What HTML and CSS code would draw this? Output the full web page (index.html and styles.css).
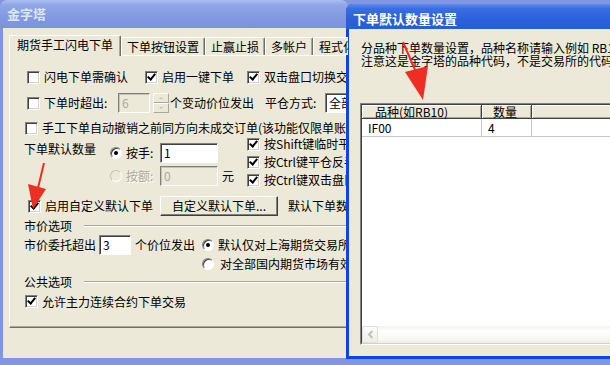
FILE: index.html
```html
<!DOCTYPE html>
<html lang="zh-CN">
<head>
  <meta charset="UTF-8" />
  <title>金字塔</title>
  <link rel="stylesheet" href="styles.css">
</head>
<body>

<div class="win main">
  <div class="title">金字塔</div>
  <div class="client">
    <div class="tabs">
      <div class="tab cur">期货手工闪电下单</div>
      <div class="tab">下单按钮设置</div>
      <div class="tab">止赢止损</div>
      <div class="tab">多帐户</div>
      <div class="tab">程式化下单</div>
    </div>
    <div class="panel">
      <div class="row r1">
        <label class="chk w118"><i class="box"></i>闪电下单需确认</label>
        <label class="chk w102"><i class="box on"></i>启用一键下单</label>
        <label class="chk"><i class="box on"></i>双击盘口切换交易方向</label>
      </div>
      <div class="row r2">
        <label class="chk w91"><i class="box"></i>下单时超出:</label>
        <span class="inp off w32">6</span>
        <span class="spin"><i class="up"></i><i class="dn"></i></span>
        <span class="ml1 w84">个变动价位发出</span>
        <span class="ml11 w60">平仓方式:</span>
        <span class="inp combo">全部平仓</span>
      </div>
      <div class="row r3">
        <label class="chk"><i class="box"></i>手工下单自动撤销之前同方向未成交订单(该功能仅限单账户)</label>
      </div>
      <div class="qty">
        <div class="qty-label">下单默认数量</div>
        <div class="qty-opts">
          <div class="row h20"><i class="rad on"></i><span class="w34">按手:</span><span class="inp w58">1</span></div>
          <div class="row h20"><i class="rad off"></i><span class="w34 dim">按额:</span><span class="inp off w58">0</span><span class="ml4">元</span></div>
        </div>
        <div class="qty-keys">
          <label class="chk"><i class="box on"></i>按Shift键临时平仓</label>
          <label class="chk"><i class="box on"></i>按Ctrl键平仓反手</label>
          <label class="chk"><i class="box on"></i>按Ctrl键双击盘口下单</label>
        </div>
      </div>
      <div class="row r5">
        <label class="chk w132"><i class="box on"></i>启用自定义默认下单</label>
        <span class="btn">自定义默认下单...</span>
        <span class="ml10">默认下单数量</span>
      </div>
      <div class="grp g1"><span>市价选项</span><i class="rule"></i></div>
      <div class="row m1">
        <span class="w75">市价委托超出</span>
        <span class="inp w32">3</span>
        <span class="ml4 w60">个价位发出</span>
        <i class="rad on ml7"></i><span>默认仅对上海期货交易所有效</span>
      </div>
      <div class="row m2">
        <i class="rad"></i><span class="ml2">对全部国内期货市场有效</span>
      </div>
      <div class="grp g2"><span>公共选项</span><i class="rule"></i></div>
      <div class="row r9">
        <label class="chk"><i class="box on"></i>允许主力连续合约下单交易</label>
      </div>
    </div>
  </div>
</div>

<div class="win dlg">
  <div class="title">下单默认数量设置</div>
  <div class="client">
    <div class="note">
      <div class="note-line">分品种下单数量设置，品种名称请输入例如 RB10</div>
      <div class="note-line">注意这是金字塔的品种代码，不是交易所的代码</div>
    </div>
    <div class="list">
      <div class="list-in">
        <div class="lhead"><div class="lc c1">品种(如RB10)</div><div class="lc c2">数量</div><div class="lc c3"></div></div>
        <div class="lrow"><div class="lc c1">IF00</div><div class="lc c2">4</div><div class="lc c3"></div></div>
        <div class="lbody"></div>
        <div class="hscroll">
          <span class="sbtn"><svg width="14" height="15" viewBox="0 0 14 15"><polyline points="8.5,4 5,7.5 8.5,11" fill="none" stroke="#c2c0b4" stroke-width="2"/></svg></span>
        </div>
      </div>
    </div>
  </div>
</div>

<svg class="marks" width="610" height="365" viewBox="0 0 610 365">
  <line x1="44" y1="163" x2="38" y2="188" stroke="#ee2e22" stroke-width="2"/>
  <polygon points="28,184 46,189 33,209" fill="#ee2e22"/>
  <line x1="403" y1="42" x2="416" y2="72" stroke="#ee2e22" stroke-width="2"/>
  <polygon points="405,72 428,66 423,100" fill="#ee2e22"/>
</svg>

</body>
</html>
```

FILE: styles.css
```css
* {
  box-sizing: border-box;
}
body {
  margin: 0;
  width: 610px;
  height: 365px;
  overflow: hidden;
  position: relative;
  background: #8196df;
  font: 12px/14px "Noto Sans CJK SC", "Noto Sans", sans-serif;
  color: #000;
}

/* windows */
.win {
  position: absolute;
  display: flex;
  flex-direction: column;
  overflow: hidden;
  border-radius: 7px 7px 0 0;
  white-space: nowrap;
}
.main {
  left: 0;
  top: 0;
  width: 348px;
  height: 365px;
  background: #8196df;
}
.dlg {
  left: 346px;
  top: 4px;
  width: 264px;
  height: 355px;
  background: #0c45e4;
  border-radius: 7px 0 0 0;
}
.title {
  flex: none;
  height: 28px;
  padding-left: 7px;
  font-weight: bold;
  font-size: 13px;
  line-height: 28px;
  overflow: hidden;
}
.main .title {
  background: linear-gradient(#aabef0, #8ea5e6 20%, #8098df 70%, #7b93dc);
  color: #dde6f9;
}
.dlg .title {
  height: 25px;
  padding-top: 5px;
  line-height: 20px;
  color: #fff;
  background: linear-gradient(#5d8cf0, #3a6ee2 18%, #2c60da 60%, #2a5bd6);
}
.client {
  flex: 1;
  min-height: 0;
  overflow: hidden;
  background: #ece9d8;
}
.main .client {
  margin: 0 0 7px 3px;
  padding: 7px 0 0 6px;
}
.dlg .client {
  margin: 0 0 3px 3px;
  padding: 12px 0 0 11px;
}

/* tabs */
.tabs {
  display: flex;
  align-items: flex-end;
  height: 20px;
  position: relative;
  z-index: 1;
}
.tab {
  flex: none;
  height: 18px;
  padding: 0 5px;
  line-height: 17px;
  background: #ece9d8;
  border-top: 1px solid #fff;
  border-left: 1px solid #fff;
  border-right: 1px solid #716f64;
  box-shadow: inset -1px 0 #aca899;
  border-radius: 2px 2px 0 0;
}
.tab.cur {
  height: 21px;
  margin-bottom: -1px;
  padding: 0 7px;
  line-height: 18px;
}
.panel {
  height: 273px;
  width: 400px;
  padding-left: 14px;
  border-top: 1px solid #fff;
  border-left: 1px solid #fff;
  border-bottom: 1px solid #716f64;
  box-shadow: inset 0 -1px #aca899;
}

/* rows */
.row {
  display: flex;
  align-items: center;
  height: 14px;
}
.h20 { height: 20px; }
.r1 { margin: 14px 0 0 3px; }
.r2 { margin: 9px 0 0 3px; height: 20px; }
.r3 { margin: 8px 0 0 1px; }
.r5 { margin: 9px 0 0 4px; height: 20px; }
.m1 { margin-top: 3px; height: 20px; }
.m2 { margin: 2px 0 0 178px; height: 13px; }
.r9 { margin: 7px 0 0 1px; height: 13px; }

.w32 { width: 32px; }
.w34 { width: 34px; }
.w58 { width: 58px; }
.w60 { width: 60px; }
.w75 { width: 75px; }
.w84 { width: 84px; }
.w91 { width: 91px; }
.w102 { width: 102px; }
.w118 { width: 118px; }
.w132 { width: 132px; }
.ml1 { margin-left: 1px; }
.ml2 { margin-left: 2px; }
.ml4 { margin-left: 4px; }
.ml7 { margin-left: 7px; }
.ml10 { margin-left: 10px; }
.ml11 { margin-left: 11px; }

.dim {
  color: #aca899;
  text-shadow: 1px 1px #fff;
}

/* controls */
.chk {
  display: flex;
  align-items: center;
  flex: none;
}
.box {
  flex: none;
  width: 13px;
  height: 13px;
  margin-right: 4px;
  position: relative;
  background: #fff;
  border: 1px solid;
  border-color: #808080 #fff #fff #808080;
  box-shadow: inset 1px 1px #404040, inset -1px -1px #d4d0c8;
}
.box.on::after {
  content: "";
  position: absolute;
  left: 3px;
  top: 0;
  width: 3px;
  height: 6px;
  border: solid #000;
  border-width: 0 2px 2px 0;
  transform: rotate(40deg);
}
.rad {
  flex: none;
  width: 12px;
  height: 12px;
  margin-right: 4px;
  position: relative;
  border-radius: 50%;
  background: #fff;
  border: 1px solid;
  border-color: #808080 #fff #fff #808080;
  box-shadow: inset 1px 1px #404040;
}
.rad.on::after {
  content: "";
  position: absolute;
  left: 3px;
  top: 3px;
  width: 4px;
  height: 4px;
  border-radius: 50%;
  background: #000;
}
.rad.off {
  background: #ece9d8;
  border-color: #c4c2b6 #fff #fff #c4c2b6;
  box-shadow: none;
}
.inp {
  flex: none;
  height: 20px;
  padding-left: 3px;
  line-height: 18px;
  background: #fff;
  border: 1px solid;
  border-color: #808080 #fff #fff #808080;
  box-shadow: inset 1px 1px #404040;
}
.inp.off {
  background: #ece9d8;
  color: #aca899;
  box-shadow: inset 1px 1px #c4c2b6;
}
.combo {
  width: 80px;
}
.spin {
  flex: none;
  width: 16px;
  height: 20px;
  margin-left: 3px;
  display: flex;
  flex-direction: column;
}
.spin i {
  flex: 1;
  position: relative;
  background: #ece9d8;
  border: 1px solid;
  border-color: #fff #aca899 #aca899 #fff;
}
.spin i::after {
  content: "";
  position: absolute;
  left: 5px;
  top: 3px;
  border: 2px solid transparent;
}
.spin .up::after {
  top: 1px;
  border-bottom-color: #c4c2b6;
}
.spin .dn::after {
  top: 3px;
  border-top-color: #c4c2b6;
}
.btn {
  flex: none;
  width: 118px;
  height: 20px;
  text-align: center;
  line-height: 18px;
  background: #ece9d8;
  border: 1px solid;
  border-color: #fff #404040 #404040 #fff;
  box-shadow: inset -1px -1px #808080;
}

/* quantity block */
.qty {
  display: flex;
  margin-top: 2px;
  height: 50px;
}
.qty-label {
  width: 86px;
  padding-top: 6px;
  line-height: 12px;
}
.qty-opts {
  width: 137px;
  padding-top: 6px;
  display: flex;
  flex-direction: column;
  gap: 3px;
}
.qty-keys {
  display: flex;
  flex-direction: column;
  gap: 4px;
}
.qty-keys .chk {
  height: 14px;
}

/* group headers */
.grp {
  display: flex;
  align-items: center;
  height: 12px;
}
.g1 { margin-top: 4px; }
.g2 { margin-top: 6px; }
.rule {
  flex: 1;
  margin-left: 12px;
  height: 2px;
  border-top: 1px solid #aca899;
  border-bottom: 1px solid #fff;
}

/* dialog */
.note {
  margin-left: 1px;
}
.note-line {
  height: 13px;
  line-height: 13px;
}
.list {
  margin-top: 36px;
  width: 280px;
  height: 242px;
  border: 1px solid;
  border-color: #808080 #fff #fff #808080;
}
.list-in {
  height: 100%;
  display: flex;
  flex-direction: column;
  background: #fff;
  border: 1px solid;
  border-color: #404040 #d4d0c8 #d4d0c8 #404040;
}
.lhead, .lrow {
  display: flex;
  flex: none;
}
.lhead {
  height: 14px;
}
.lhead .lc {
  background: #ece9d8;
  border-right: 1px solid #404040;
  border-bottom: 1px solid #404040;
  box-shadow: inset 1px 1px #fff, inset -1px -1px #aca899;
  line-height: 13px;
}
.lrow {
  height: 18px;
  border-bottom: 1px solid #c8c8c8;
}
.lrow .lc {
  border-right: 1px solid #c8c8c8;
  line-height: 17px;
  padding-left: 6px;
}
.c1 { width: 120px; }
.c2 { width: 50px; }
.c3 { flex: 1; }
.lhead .c1 { padding-left: 13px; }
.lhead .c2 { padding-left: 11px; }
.lbody {
  flex: 1;
}
.hscroll {
  flex: none;
  height: 17px;
  background: linear-gradient(#f3f1ec, #fefefe 30%, #f7f6f1 80%, #eeede5);
}
.sbtn {
  display: block;
  width: 16px;
  height: 17px;
  padding: 0 0 0 1px;
  background: linear-gradient(#fbfbf8, #efeee6);
  border: 1px solid #e2e0d6;
  border-radius: 2px;
}
.sbtn svg {
  display: block;
}

/* red markers */
.marks {
  position: absolute;
  left: 0;
  top: 0;
  pointer-events: none;
}
```
